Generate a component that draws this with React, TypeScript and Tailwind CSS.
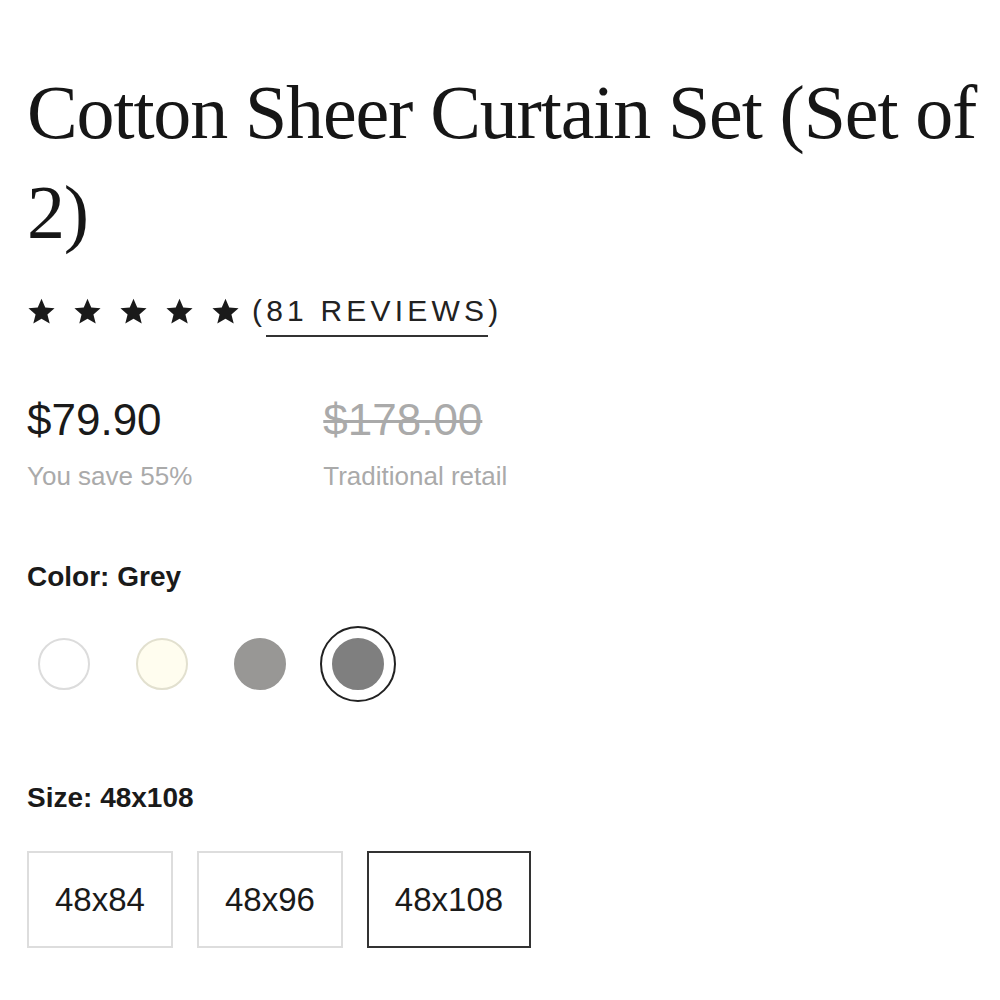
import { useState } from 'react'

const colors = [
  { name: 'White', swatch: 'bg-white border-[#dcdcdc]' },
  { name: 'Ivory', swatch: 'bg-[#fffdef] border-[#e2e0cf]' },
  { name: 'Light Grey', swatch: 'bg-[#989795] border-[#989795]' },
  { name: 'Grey', swatch: 'bg-[#7f7f7f] border-[#7f7f7f]' },
]

const sizes = ['48x84', '48x96', '48x108']

function Star() {
  return (
    <svg viewBox="0 0 24 24" className="h-[29px] w-[29px]" fill="#1a1a1a">
      <path d="M12 1.5l3.1 7.2 7.7.6-5.9 5.1 1.9 7.6L12 18l-6.8 4 1.9-7.6-5.9-5.1 7.7-.6z" />
    </svg>
  )
}

export default function App() {
  const [color, setColor] = useState('Grey')
  const [size, setSize] = useState('48x108')

  return (
    <div className="min-h-screen bg-white pl-[27px] pt-[62px] text-[#1a1a1a] font-['Liberation_Sans',Arial,sans-serif]">
      <h1 className="font-['Liberation_Serif','Times_New_Roman',serif] text-[76px] leading-[100px] tracking-[-0.015em] text-[#161616] max-w-[970px]">
        Cotton Sheer Curtain Set (Set of 2)
      </h1>

      <div className="mt-[34px] flex h-[30px] items-center">
        <div className="flex gap-[17px]">
          {[0, 1, 2, 3, 4].map((i) => (
            <Star key={i} />
          ))}
        </div>
        <a href="#" className="ml-[12px] text-[30px] leading-[30px] tracking-[0.14em] text-[#222]">
          (
          <span className="border-b-2 border-[#333] pb-[8px]">81 REVIEWS</span>)
        </a>
      </div>

      <div className="mt-[69px] flex gap-[131px]">
        <div>
          <div className="text-[44px] leading-[50px] text-[#1a1a1a]">$79.90</div>
          <div className="mt-[16px] text-[26px] leading-[30px] text-[#aaaaaa]">You save 55%</div>
        </div>
        <div>
          <div className="text-[44px] leading-[50px] text-[#aaaaaa] line-through decoration-[3px]">$178.00</div>
          <div className="mt-[16px] text-[26px] leading-[30px] text-[#aaaaaa]">Traditional retail</div>
        </div>
      </div>

      <div className="mt-[70px] text-[28px] leading-[32px] font-semibold">Color: {color}</div>
      <div className="mt-[33px] -ml-[1px] flex items-center gap-[22px]">
        {colors.map((c) => (
          <button
            key={c.name}
            onClick={() => setColor(c.name)}
            className={`flex h-[76px] w-[76px] items-center justify-center rounded-full border-2 ${
              color === c.name ? 'border-[#222]' : 'border-transparent'
            }`}
          >
            <span className={`block h-[52px] w-[52px] rounded-full border-2 ${c.swatch}`} />
          </button>
        ))}
      </div>

      <div className="mt-[80px] text-[28px] leading-[32px] font-semibold">Size: {size}</div>
      <div className="mt-[37px] flex gap-[24px]">
        {sizes.map((s) => (
          <button
            key={s}
            onClick={() => setSize(s)}
            className={`h-[97px] px-[26px] text-[33px] ${
              size === s ? 'border-2 border-[#333]' : 'border-2 border-[#dddddd]'
            }`}
          >
            {s}
          </button>
        ))}
      </div>
    </div>
  )
}
